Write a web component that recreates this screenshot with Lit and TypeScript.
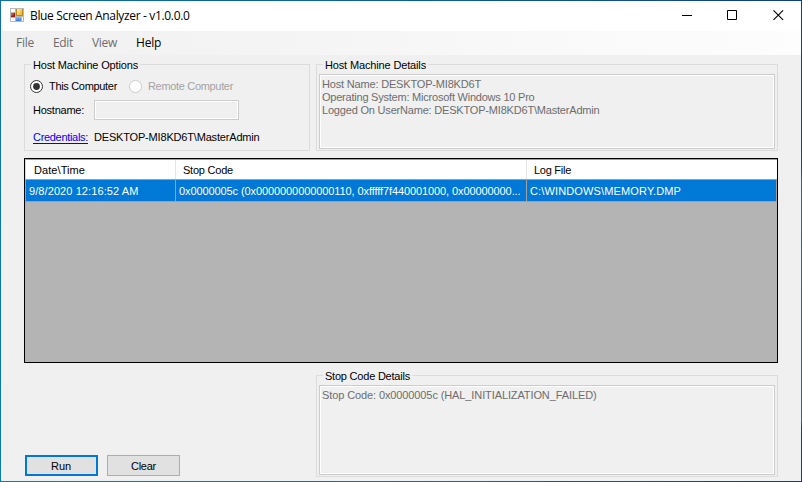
import { LitElement, html, css, svg } from "lit";
import { customElement, property } from "lit/decorators.js";
import { styleMap } from "lit/directives/style-map.js";

const ctx = document.createElement("canvas").getContext("2d")!;

/** A single line of text whose tracking is adjusted to an exact advance width. */
@customElement("ui-text")
class UiText extends LitElement {
  @property() text = "";
  @property({ type: Number }) width = 0;
  @property() font = '11px "Liberation Sans"';

  static styles = css`
    :host { display: inline-block; white-space: pre; }
    .line { display: block; }
  `;

  render() {
    ctx.font = this.font;
    const spacing = (this.width - ctx.measureText(this.text).width) / this.text.length;
    return html`<span class="line" style=${styleMap({ letterSpacing: `${spacing.toFixed(3)}px` })}>${this.text}</span>`;
  }
}

/** Titled frame. */
@customElement("ui-group")
class UiGroup extends LitElement {
  @property() label = "";
  @property({ type: Number }) labelWidth = 0;

  static styles = css`
    :host { display: block; box-sizing: border-box; border: 1px solid #dcdcdc; position: relative; }
    .label { position: absolute; left: 6px; top: -6px; height: 13px; line-height: 13px; padding: 0 2px; background: #f0f0f0; }
  `;

  render() {
    return html`<span class="label"><ui-text .text=${this.label} .width=${this.labelWidth}></ui-text></span><slot></slot>`;
  }
}

const t = (text: string, width: number) => html`<ui-text .text=${text} .width=${width}></ui-text>`;
const sans = '12px "Open Sans"';
const menu = [
  { text: "File", width: 18, on: false },
  { text: "Edit", width: 20, on: false },
  { text: "View", width: 25, on: false },
  { text: "Help", width: 25, on: true },
];

@customElement("app-root")
class AppRoot extends LitElement {
  static styles = css`
    :host { display: block; width: 802px; height: 482px; overflow: hidden; font: 11px/13px "Liberation Sans", Arial, sans-serif; color: #000; }
    * { box-sizing: border-box; }
    .window {
      display: grid; grid-template-rows: 30px 24px 1fr; width: 802px; height: 482px; padding: 1px;
      background:
        linear-gradient(90deg, #0b70a3, #0a5f9e 50%, #103f86) top / 100% 1px no-repeat,
        linear-gradient(90deg, #0c7fab, #0f70a4 50%, #153f80) bottom / 100% 1px no-repeat,
        linear-gradient(#0d6fa8, #0b7bab) left / 1px 100% no-repeat,
        linear-gradient(#103f86, #15478a 35%, #1b7394 38%, #1f6f96 87%, #153f80 89%) right / 1px 100% no-repeat;
    }
    .title { display: flex; align-items: center; background: #fff; padding-left: 9px; font: 12px/16px "Open Sans", sans-serif; }
    .title .name { margin-left: 6px; flex: 1; }
    .title .app { display: block; margin-bottom: 2px; }
    .title .ctl { display: block; width: 46px; height: 30px; }
    .title .last { margin-right: -1px; }
    .menu { display: flex; align-items: center; gap: 19px; padding-left: 15px; background: linear-gradient(90deg, #f0f0f0, #fdfdfd); font: 12px/16px "Open Sans", sans-serif; color: #6d6d6d; }
    .menu .on { color: #000; }
    .body { background: #f0f0f0; padding: 9px 23px 4px; display: flex; flex-direction: column; }
    .top { display: flex; gap: 6px; height: 87px; }
    .options { width: 286px; padding: 14px 0 0 5px; }
    .radios { display: flex; align-items: center; height: 14px; }
    .radios svg { display: block; }
    .radios .txt { margin-left: 6px; }
    .radios .second { margin-left: 12px; }
    .off { color: #a3a3a3; }
    .host { display: flex; align-items: center; margin: 7px 0 0 3px; height: 20px; }
    .field { width: 145px; height: 20px; border: 1px solid #ccc; box-shadow: inset 0 0 0 1px #fff; margin-left: 10px; }
    .cred { display: flex; margin: 11px 0 0 3px; }
    .link { color: #00f; border-bottom: 1px solid #00f; height: 13px; }
    .user { margin-left: 6px; }
    .details { flex: 1; padding: 9px 2px 1px; }
    .box { height: 100%; border: 1px solid #ccc; box-shadow: inset 0 0 0 1px #fff; padding: 3px 2px; color: #6d6d6d; display: flex; flex-direction: column; }
    .grid { margin-top: 7px; height: 205px; border: 1px solid #000; background: #b4b4b4; }
    .row { display: grid; grid-template-columns: 150px 351px 1fr; }
    .head { height: 21px; background: #fff; border-top: 1px solid #a0a0a0; border-bottom: 1px solid #a0a0a0; border-left: 1px solid #d8d8d8; }
    .head .cell { padding: 4px 0 0 7px; border-right: 1px solid #e5e5e5; }
    .head .cell:first-child { padding-left: 8px; }
    .head .cell:last-child, .sel .cell:last-child { border-right: 0; }
    .sel { height: 22px; background: #0078d7; color: #fff; border: 1px solid #a0a0a0; border-top: 0; }
    .sel .cell { padding: 5px 0 0 3px; border-right: 1px solid #a0a0a0; }
    .foot { display: flex; margin-top: 12px; height: 102px; }
    .buttons { width: 292px; display: flex; gap: 9px; align-items: flex-end; padding: 0 0 1px 1px; }
    .btn { width: 73px; height: 21px; background: #e1e1e1; border: 1px solid #adadad; display: flex; justify-content: center; padding-top: 4px; }
    .primary { border: 2px solid #0078d7; padding: 3px 1px 0 0; }
  `;

  private appIcon() {
    return svg`<svg class="app" width="14" height="14" viewBox="0 0 14 14" shape-rendering="crispEdges">
      <defs>
        <linearGradient id="y" x2="1" y2="1"><stop stop-color="#fff0a0"/><stop offset="1" stop-color="#eeb020"/></linearGradient>
        <linearGradient id="b" x2="0" y2="1"><stop stop-color="#8bb9f4"/><stop offset="1" stop-color="#3b79d8"/></linearGradient>
        <linearGradient id="r" x2="1" y2="1"><stop stop-color="#e0786c"/><stop offset="1" stop-color="#a8160e"/></linearGradient>
      </defs>
      <rect width="14" height="14" fill="#b9b9b9"/>
      <path d="M1 1h4v3H1zM1 10h4v3H1zM12 9h1v4h-1z" fill="#fff"/>
      <rect x="6" y="1" width="7" height="7" fill="#c08a14"/><rect x="7" y="1" width="5" height="6" fill="url(#y)"/>
      <rect x="1" y="5" width="4" height="4" fill="#981a14"/><rect x="1" y="5" width="3" height="3" fill="url(#r)"/>
      <rect x="6" y="9" width="5" height="4" fill="url(#b)"/>
    </svg>`;
  }

  private radio(checked: boolean) {
    return svg`<svg width="13" height="13" viewBox="0 0 13 13">
      <circle cx="6.5" cy="6.5" r="6" fill="#fff" stroke=${checked ? "#333" : "#ccc"}/>
      ${checked ? svg`<circle cx="6.5" cy="6.5" r="3.4" fill="#333"/>` : ""}
    </svg>`;
  }

  render() {
    return html`<div class="window">
      <div class="title">
        ${this.appIcon()}
        <ui-text class="name" .text=${"Blue Screen Analyzer - v1.0.0.0"} .width=${159.5} .font=${sans}></ui-text>
        <svg class="ctl" viewBox="0 0 46 30"><path d="M18 14.5h10" stroke="#000"/></svg>
        <svg class="ctl" viewBox="0 0 46 30"><path d="M17.5 9.5h9v9h-9z" fill="none" stroke="#000"/></svg>
        <svg class="ctl last" viewBox="0 0 46 30"><path d="M17.5 9.3l9.6 9.6M27.1 9.3l-9.6 9.6" stroke="#000" stroke-width="1.1"/></svg>
      </div>
      <div class="menu">
        ${menu.map((m) => html`<ui-text class=${m.on ? "on" : ""} .text=${m.text} .width=${m.width} .font=${sans}></ui-text>`)}
      </div>
      <div class="body">
        <div class="top">
          <ui-group class="options" .label=${"Host Machine Options"} .labelWidth=${105}>
            <div class="radios">
              ${this.radio(true)}<span class="txt">${t("This Computer", 68)}</span>
              <span class="second">${this.radio(false)}</span><span class="txt off">${t("Remote Computer", 85)}</span>
            </div>
            <div class="host">${t("Hostname:", 51)}<div class="field"></div></div>
            <div class="cred"><span class="link">${t("Credentials:", 55)}</span><span class="user">${t("DESKTOP-MI8KD6T\\MasterAdmin", 165.5)}</span></div>
          </ui-group>
          <ui-group class="details" .label=${"Host Machine Details"} .labelWidth=${101}>
            <div class="box">
              ${t("Host Name: DESKTOP-MI8KD6T", 159)}
              ${t("Operating System: Microsoft Windows 10 Pro", 212.5)}
              ${t("Logged On UserName: DESKTOP-MI8KD6T\\MasterAdmin", 277.5)}
            </div>
          </ui-group>
        </div>
        <div class="grid">
          <div class="row head">
            <div class="cell">${t("Date\\Time", 51)}</div>
            <div class="cell">${t("Stop Code", 50)}</div>
            <div class="cell">${t("Log File", 37)}</div>
          </div>
          <div class="row sel">
            <div class="cell">${t("9/8/2020 12:16:52 AM", 110)}</div>
            <div class="cell">${t("0x0000005c (0x0000000000000110, 0xfffff7f440001000, 0x00000000...", 341.5)}</div>
            <div class="cell">${t("C:\\WINDOWS\\MEMORY.DMP", 151)}</div>
          </div>
        </div>
        <div class="foot">
          <div class="buttons">
            <div class="btn primary">${t("Run", 20)}</div>
            <div class="btn">${t("Clear", 25)}</div>
          </div>
          <ui-group class="details" .label=${"Stop Code Details"} .labelWidth=${85}>
            <div class="box">${t("Stop Code: 0x0000005c (HAL_INITIALIZATION_FAILED)", 274.5)}</div>
          </ui-group>
        </div>
      </div>
    </div>`;
  }
}
